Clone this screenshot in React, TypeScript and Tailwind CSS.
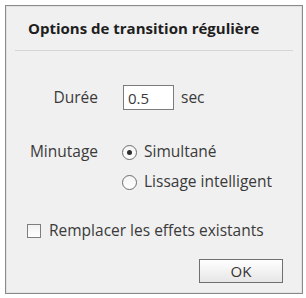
import React, { useState } from 'react';

const font = { fontFamily: '"Open Sans", "Noto Sans", Arial, sans-serif' };

const Radio: React.FC<{ checked: boolean; label: string; onClick: () => void }> = ({ checked, label, onClick }) => (
  <button type="button" onClick={onClick} className="flex h-[20px] items-center gap-[7px] text-[15.5px] text-[#3a3a3a]">
    <span className="flex h-[15px] w-[15px] items-center justify-center rounded-full border border-[#6e6e6e] bg-gradient-to-b from-[#f4f4f4] to-[#ffffff]">
      {checked && <span className="h-[5px] w-[5px] rounded-full bg-[#2e2e2e]" />}
    </span>
    <span>{label}</span>
  </button>
);

const App: React.FC = () => {
  const [duration, setDuration] = useState('0.5');
  const [timing, setTiming] = useState<'sim' | 'smooth'>('sim');
  const [replace, setReplace] = useState(false);

  return (
    <div className="h-[298px] w-[306px] bg-white p-[5px]" style={font}>
      <div className="flex h-[289px] w-[298px] flex-col border border-[#8a8a8a] bg-[#f0f0f0] shadow-[inset_0_0_0_1px_#e2e2e2]">
        <div className="flex h-[44px] items-center pl-[22px] text-[15px] font-bold text-[#1e1e1e]">
          Options de transition régulière
        </div>
        <div className="mx-[9px] h-px bg-[#d6d6d6]" />

        <div className="mt-[34px] grid grid-cols-[92px_1fr] items-center gap-x-[24px] text-[15.5px] text-[#3a3a3a]">
          <span className="text-right">Durée</span>
          <div className="flex items-center gap-[7px]">
            <input
              value={duration}
              onChange={(e) => setDuration(e.target.value)}
              className="ml-px h-[25px] w-[51px] border border-[#7c7c7c] bg-white px-[4px] text-[15px] text-[#3a3a3a] outline-none"
            />
            <span>sec</span>
          </div>
        </div>

        <div className="mt-[32px] grid grid-cols-[92px_1fr] gap-x-[24px] gap-y-[10px] text-[15.5px] text-[#3a3a3a]">
          <span className="flex h-[20px] items-center justify-end">Minutage</span>
          <Radio checked={timing === 'sim'} label="Simultané" onClick={() => setTiming('sim')} />
          <span />
          <Radio checked={timing === 'smooth'} label="Lissage intelligent" onClick={() => setTiming('smooth')} />
        </div>

        <button
          type="button"
          onClick={() => setReplace(!replace)}
          className="mt-[29px] ml-[21px] flex h-[20px] items-center gap-[8px] text-[15.5px] text-[#3a3a3a]"
        >
          <span className="flex h-[14px] w-[14px] items-center justify-center border border-[#7e7e7e] bg-gradient-to-b from-[#f2f2f2] to-white text-[10px] leading-none">
            {replace ? '✓' : ''}
          </span>
          <span>Remplacer les effets existants</span>
        </button>

        <div className="mt-[18px] flex justify-end pr-[19px]">
          <button
            type="button"
            className="h-[24px] w-[84px] border border-[#707070] bg-gradient-to-b from-white to-[#e6e6e6] text-[15px] text-[#333]"
          >
            OK
          </button>
        </div>
      </div>
    </div>
  );
};

export default App;
